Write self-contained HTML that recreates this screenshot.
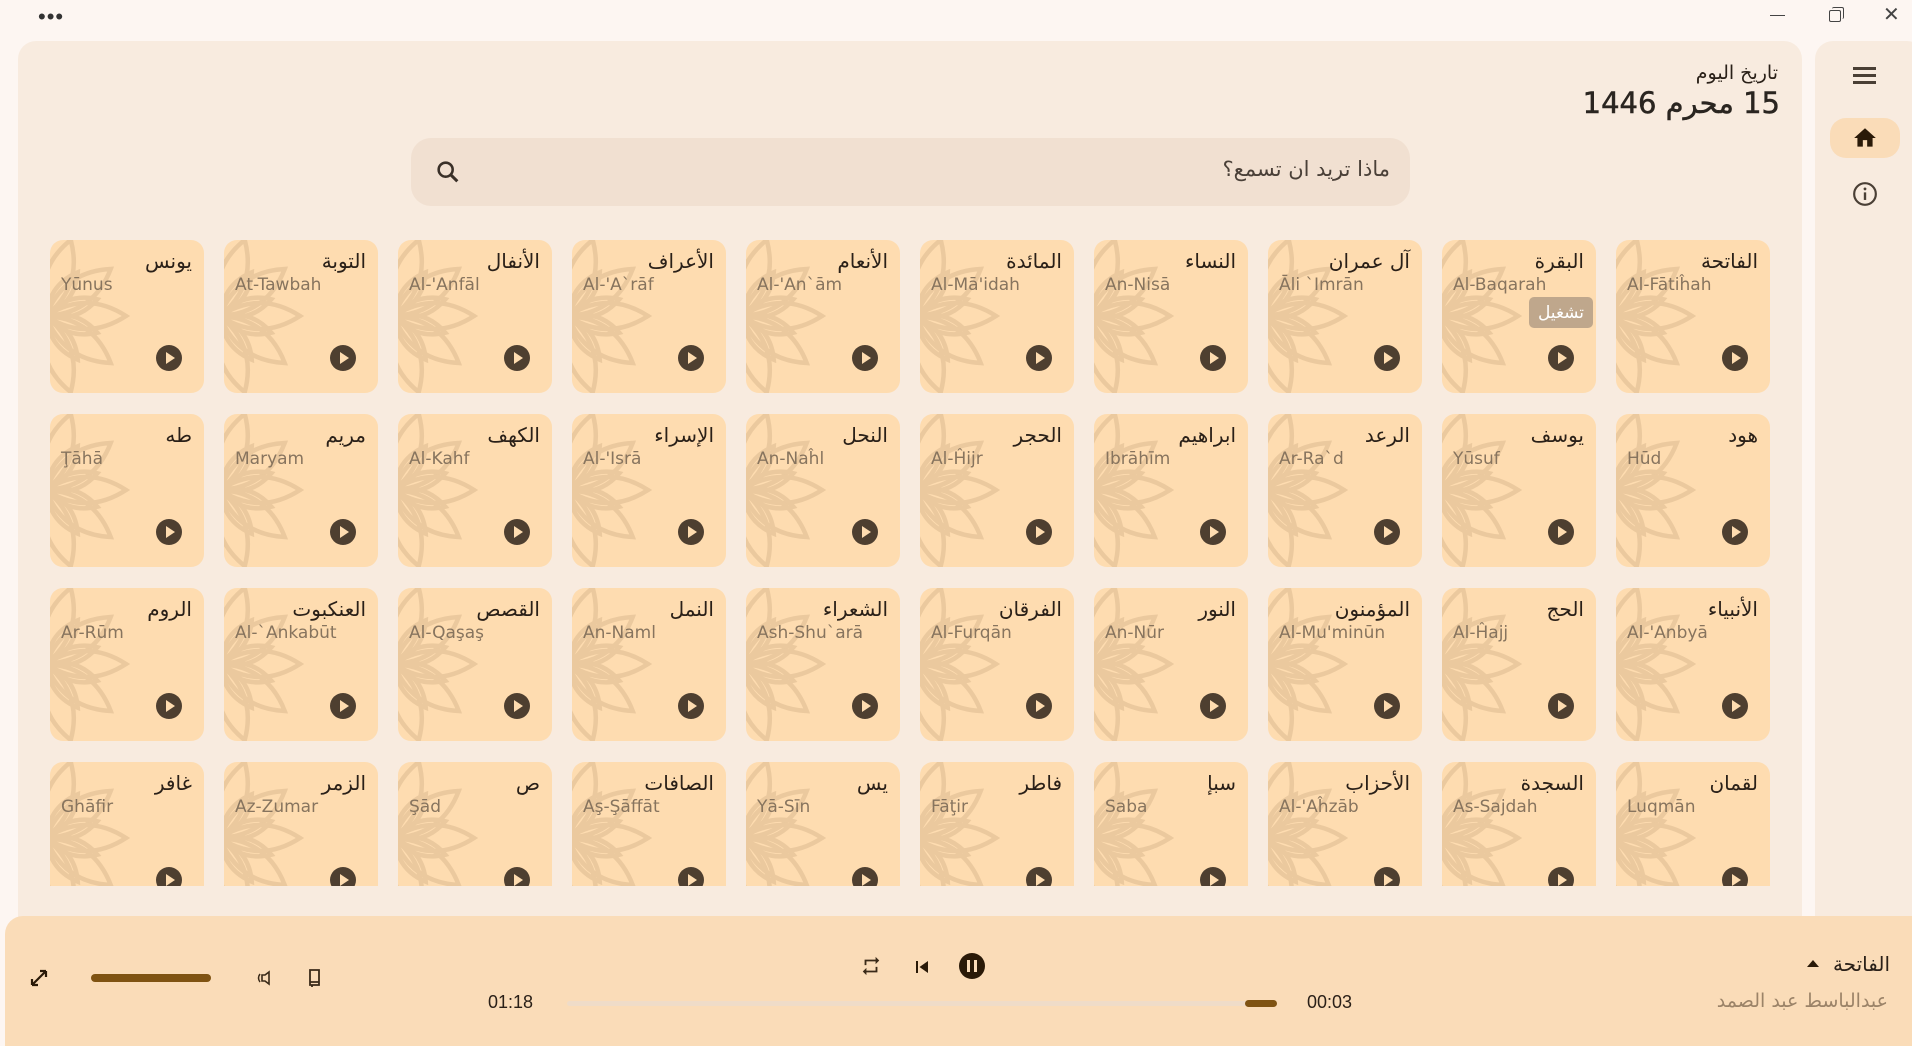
<!DOCTYPE html>
<html><head><meta charset="utf-8"><style>
*{margin:0;padding:0;box-sizing:border-box}
body{width:1912px;height:1037px;overflow:hidden;background:#fdf6f2;font-family:"Liberation Sans","DejaVu Sans","Noto Sans CJK SC",sans-serif;position:relative;color:#2a2018}
.main{position:absolute;left:18px;top:41px;width:1784px;height:960px;background:#f8ebdf;border-radius:18px}
.side{position:absolute;left:1815px;top:41px;width:110px;height:960px;background:#f8ebdf;border-radius:18px}
.grid{position:absolute;left:50px;top:240px;width:1720px;height:646px;overflow:hidden;display:grid;grid-template-columns:repeat(10,154px);grid-auto-rows:153px;column-gap:20px;row-gap:21px;direction:rtl}
.card{position:relative;background:#fedcb0;border-radius:13px;overflow:hidden}
.card svg.fl{position:absolute;left:0;top:0}
.ar{position:absolute;right:12px;top:9px;font-size:20px;color:#2a2018;direction:rtl;font-family:"DejaVu Sans",sans-serif}
.en{position:absolute;left:11px;top:35px;font-size:17px;color:#87745e;direction:ltr;white-space:nowrap;font-family:"DejaVu Sans",sans-serif}
.pl{position:absolute;left:106px;top:105px;width:26px;height:26px;border-radius:50%;background:#4e3f30}
.pl:after{content:"";position:absolute;left:10px;top:7px;border-left:9px solid #fedcb0;border-top:6px solid transparent;border-bottom:6px solid transparent}
.player{position:absolute;left:5px;top:916px;width:1920px;height:130px;background:#fadcb8;border-radius:18px 0 0 0}
.t{position:absolute;font-size:18px;color:#2a2018}
</style></head><body>
<svg width="0" height="0" style="position:absolute"><defs>
<path id="p" d="M0 0 Q40 -26 80 0 Q40 26 0 0Z"/>
<path id="q" d="M0 0 Q28 -16 54 0 Q28 16 0 0Z"/>
<symbol id="f" viewBox="0 0 154 153"><g fill="none" stroke="#ebc99e" stroke-width="4.5" stroke-linejoin="miter" transform="translate(-4 76)">
<use href="#p" transform="rotate(-72)"/><use href="#p" transform="rotate(-36)"/><use href="#p" transform="rotate(0)"/><use href="#p" transform="rotate(36)"/><use href="#p" transform="rotate(72)"/>
<use href="#q" transform="rotate(-54)"/><use href="#q" transform="rotate(-18)"/><use href="#q" transform="rotate(18)"/><use href="#q" transform="rotate(54)"/>
</g></symbol></defs></svg>
<div style="position:absolute;left:38px;top:4px;font-size:22px;letter-spacing:1px;color:#333">•••</div>
<div style="position:absolute;left:1770px;top:15px;width:15px;height:1px;background:#444"></div>
<div style="position:absolute;left:1829px;top:10px;width:12px;height:12px;border:1.3px solid #444;border-radius:2px"></div>
<div style="position:absolute;left:1832px;top:7px;width:12px;height:12px;border-top:1.3px solid #444;border-right:1.3px solid #444;border-radius:2px"></div>
<div style="position:absolute;left:1883px;top:2px;font-size:20px;color:#444">✕</div>
<div class="main"></div>
<div class="side"></div>
<div style="position:absolute;left:1853px;top:67px;width:23px;height:2.5px;background:#4a3f35;box-shadow:0 7px 0 #4a3f35,0 14px 0 #4a3f35"></div>
<div style="position:absolute;left:1830px;top:118px;width:70px;height:40px;background:#fadcb8;border-radius:16px"></div>
<svg style="position:absolute;left:1852px;top:125px" width="26" height="26" viewBox="0 0 24 24"><path d="M10 20v-6h4v6h5v-8h3L12 3 2 12h3v8z" fill="#2a1a08"/></svg>
<svg style="position:absolute;left:1852px;top:181px" width="26" height="26" viewBox="0 0 24 24"><circle cx="12" cy="12" r="10" fill="none" stroke="#4a3f35" stroke-width="2"/><path d="M12 10.5v7" stroke="#4a3f35" stroke-width="2.2"/><circle cx="12" cy="7.3" r="1.3" fill="#4a3f35"/></svg>
<div style="position:absolute;right:134px;top:62px;font-size:19px;direction:rtl;font-family:'DejaVu Sans',sans-serif">تاريخ اليوم</div>
<div style="position:absolute;right:132px;top:86px;font-size:29px;direction:rtl;font-family:'DejaVu Sans',sans-serif;color:#2a2520;-webkit-text-stroke:0.5px #2a2520">15 محرم 1446</div>
<div style="position:absolute;left:411px;top:138px;width:999px;height:68px;background:#f1e0d1;border-radius:20px"></div>
<svg style="position:absolute;left:434px;top:158px" width="28" height="28" viewBox="0 0 24 24"><circle cx="10" cy="10" r="6" fill="none" stroke="#3a3028" stroke-width="2.2"/><path d="M14.5 14.5L20 20" stroke="#3a3028" stroke-width="2.6"/></svg>
<div style="position:absolute;right:522px;top:157px;font-size:21px;color:#4a4038;direction:rtl;font-family:'DejaVu Sans',sans-serif">ماذا تريد ان تسمع؟</div>
<div class="grid">
<div class="card"><svg class="fl" width="154" height="153"><use href="#f"/></svg><div class="ar">الفاتحة</div><div class="en">Al-Fātiĥah</div><div class="pl"></div></div>
<div class="card"><svg class="fl" width="154" height="153"><use href="#f"/></svg><div class="ar">البقرة</div><div class="en">Al-Baqarah</div><div style="position:absolute;left:87px;top:57px;width:64px;height:31px;background:#bfa78c;border-radius:5px;color:#fff;font-size:17px;text-align:center;line-height:31px">تشغيل</div><div class="pl"></div></div>
<div class="card"><svg class="fl" width="154" height="153"><use href="#f"/></svg><div class="ar">آل عمران</div><div class="en">Āli `Imrān</div><div class="pl"></div></div>
<div class="card"><svg class="fl" width="154" height="153"><use href="#f"/></svg><div class="ar">النساء</div><div class="en">An-Nisā</div><div class="pl"></div></div>
<div class="card"><svg class="fl" width="154" height="153"><use href="#f"/></svg><div class="ar">المائدة</div><div class="en">Al-Mā'idah</div><div class="pl"></div></div>
<div class="card"><svg class="fl" width="154" height="153"><use href="#f"/></svg><div class="ar">الأنعام</div><div class="en">Al-'An`ām</div><div class="pl"></div></div>
<div class="card"><svg class="fl" width="154" height="153"><use href="#f"/></svg><div class="ar">الأعراف</div><div class="en">Al-'A`rāf</div><div class="pl"></div></div>
<div class="card"><svg class="fl" width="154" height="153"><use href="#f"/></svg><div class="ar">الأنفال</div><div class="en">Al-'Anfāl</div><div class="pl"></div></div>
<div class="card"><svg class="fl" width="154" height="153"><use href="#f"/></svg><div class="ar">التوبة</div><div class="en">At-Tawbah</div><div class="pl"></div></div>
<div class="card"><svg class="fl" width="154" height="153"><use href="#f"/></svg><div class="ar">يونس</div><div class="en">Yūnus</div><div class="pl"></div></div>
<div class="card"><svg class="fl" width="154" height="153"><use href="#f"/></svg><div class="ar">هود</div><div class="en">Hūd</div><div class="pl"></div></div>
<div class="card"><svg class="fl" width="154" height="153"><use href="#f"/></svg><div class="ar">يوسف</div><div class="en">Yūsuf</div><div class="pl"></div></div>
<div class="card"><svg class="fl" width="154" height="153"><use href="#f"/></svg><div class="ar">الرعد</div><div class="en">Ar-Ra`d</div><div class="pl"></div></div>
<div class="card"><svg class="fl" width="154" height="153"><use href="#f"/></svg><div class="ar">ابراهيم</div><div class="en">Ibrāhīm</div><div class="pl"></div></div>
<div class="card"><svg class="fl" width="154" height="153"><use href="#f"/></svg><div class="ar">الحجر</div><div class="en">Al-Ĥijr</div><div class="pl"></div></div>
<div class="card"><svg class="fl" width="154" height="153"><use href="#f"/></svg><div class="ar">النحل</div><div class="en">An-Naĥl</div><div class="pl"></div></div>
<div class="card"><svg class="fl" width="154" height="153"><use href="#f"/></svg><div class="ar">الإسراء</div><div class="en">Al-'Isrā</div><div class="pl"></div></div>
<div class="card"><svg class="fl" width="154" height="153"><use href="#f"/></svg><div class="ar">الكهف</div><div class="en">Al-Kahf</div><div class="pl"></div></div>
<div class="card"><svg class="fl" width="154" height="153"><use href="#f"/></svg><div class="ar">مريم</div><div class="en">Maryam</div><div class="pl"></div></div>
<div class="card"><svg class="fl" width="154" height="153"><use href="#f"/></svg><div class="ar">طه</div><div class="en">Ţāhā</div><div class="pl"></div></div>
<div class="card"><svg class="fl" width="154" height="153"><use href="#f"/></svg><div class="ar">الأنبياء</div><div class="en">Al-'Anbyā</div><div class="pl"></div></div>
<div class="card"><svg class="fl" width="154" height="153"><use href="#f"/></svg><div class="ar">الحج</div><div class="en">Al-Ĥajj</div><div class="pl"></div></div>
<div class="card"><svg class="fl" width="154" height="153"><use href="#f"/></svg><div class="ar">المؤمنون</div><div class="en">Al-Mu'minūn</div><div class="pl"></div></div>
<div class="card"><svg class="fl" width="154" height="153"><use href="#f"/></svg><div class="ar">النور</div><div class="en">An-Nūr</div><div class="pl"></div></div>
<div class="card"><svg class="fl" width="154" height="153"><use href="#f"/></svg><div class="ar">الفرقان</div><div class="en">Al-Furqān</div><div class="pl"></div></div>
<div class="card"><svg class="fl" width="154" height="153"><use href="#f"/></svg><div class="ar">الشعراء</div><div class="en">Ash-Shu`arā</div><div class="pl"></div></div>
<div class="card"><svg class="fl" width="154" height="153"><use href="#f"/></svg><div class="ar">النمل</div><div class="en">An-Naml</div><div class="pl"></div></div>
<div class="card"><svg class="fl" width="154" height="153"><use href="#f"/></svg><div class="ar">القصص</div><div class="en">Al-Qaşaş</div><div class="pl"></div></div>
<div class="card"><svg class="fl" width="154" height="153"><use href="#f"/></svg><div class="ar">العنكبوت</div><div class="en">Al-`Ankabūt</div><div class="pl"></div></div>
<div class="card"><svg class="fl" width="154" height="153"><use href="#f"/></svg><div class="ar">الروم</div><div class="en">Ar-Rūm</div><div class="pl"></div></div>
<div class="card"><svg class="fl" width="154" height="153"><use href="#f"/></svg><div class="ar">لقمان</div><div class="en">Luqmān</div><div class="pl"></div></div>
<div class="card"><svg class="fl" width="154" height="153"><use href="#f"/></svg><div class="ar">السجدة</div><div class="en">As-Sajdah</div><div class="pl"></div></div>
<div class="card"><svg class="fl" width="154" height="153"><use href="#f"/></svg><div class="ar">الأحزاب</div><div class="en">Al-'Aĥzāb</div><div class="pl"></div></div>
<div class="card"><svg class="fl" width="154" height="153"><use href="#f"/></svg><div class="ar">سبإ</div><div class="en">Saba</div><div class="pl"></div></div>
<div class="card"><svg class="fl" width="154" height="153"><use href="#f"/></svg><div class="ar">فاطر</div><div class="en">Fāţir</div><div class="pl"></div></div>
<div class="card"><svg class="fl" width="154" height="153"><use href="#f"/></svg><div class="ar">يس</div><div class="en">Yā-Sīn</div><div class="pl"></div></div>
<div class="card"><svg class="fl" width="154" height="153"><use href="#f"/></svg><div class="ar">الصافات</div><div class="en">Aş-Şāffāt</div><div class="pl"></div></div>
<div class="card"><svg class="fl" width="154" height="153"><use href="#f"/></svg><div class="ar">ص</div><div class="en">Şād</div><div class="pl"></div></div>
<div class="card"><svg class="fl" width="154" height="153"><use href="#f"/></svg><div class="ar">الزمر</div><div class="en">Az-Zumar</div><div class="pl"></div></div>
<div class="card"><svg class="fl" width="154" height="153"><use href="#f"/></svg><div class="ar">غافر</div><div class="en">Ghāfir</div><div class="pl"></div></div>
</div>
<div class="player"></div>
<svg style="position:absolute;left:28px;top:967px" width="22" height="22" viewBox="0 0 22 22"><path d="M4 18L18 4M4 18v-6M4 18h6M18 4h-6M18 4v6" stroke="#2a1a08" stroke-width="2.2" fill="none"/></svg>
<div style="position:absolute;left:91px;top:974px;width:120px;height:8px;background:#7f5312;border-radius:4px"></div>
<svg style="position:absolute;left:256px;top:969px" width="18" height="18" viewBox="0 0 18 18"><path d="M6 6h3l4-3v12l-4-3H6z" fill="none" stroke="#3a2a18" stroke-width="1.6"/><path d="M4 5Q1 9 4 13" fill="none" stroke="#3a2a18" stroke-width="1.5"/></svg>
<svg style="position:absolute;left:306px;top:968px" width="18" height="20" viewBox="0 0 18 20"><path d="M4 2h9v15H4zM4 14h9M6 17v2" fill="none" stroke="#3a2a18" stroke-width="1.8"/></svg>
<svg style="position:absolute;left:860px;top:955px" width="22" height="22" viewBox="0 0 24 24"><path d="M7 7h10v3l4-4-4-4v3H5v6h2zM17 17H7v-3l-4 4 4 4v-3h12v-6h-2z" fill="#3a2a18"/></svg>
<svg style="position:absolute;left:910px;top:955px" width="24" height="24" viewBox="0 0 24 24"><path d="M6 6h2v12H6zm3.5 6l8.5 6V6z" fill="#2a1a08"/></svg>
<div style="position:absolute;left:959px;top:953px;width:26px;height:26px;border-radius:50%;background:#2a1a08"></div>
<div style="position:absolute;left:967px;top:960px;width:3px;height:12px;background:#fadcb8;box-shadow:7px 0 0 #fadcb8"></div>
<div class="t" style="left:488px;top:992px">01:18</div>
<div style="position:absolute;left:567px;top:1001px;width:710px;height:5px;background:#efdcc8;border-radius:3px"></div>
<div style="position:absolute;left:1245px;top:1000px;width:32px;height:7px;background:#7f5312;border-radius:4px"></div>
<div class="t" style="left:1307px;top:992px">00:03</div>
<div style="position:absolute;left:1807px;top:960px;border-bottom:7px solid #2a1a08;border-left:6px solid transparent;border-right:6px solid transparent"></div>
<div style="position:absolute;right:22px;top:952px;font-size:20px;direction:rtl;font-family:'DejaVu Sans',sans-serif">الفاتحة</div>
<div style="position:absolute;right:24px;top:990px;font-size:19px;color:#9b8368;direction:rtl;font-family:'DejaVu Sans',sans-serif">عبدالباسط عبد الصمد</div>
</body></html>
